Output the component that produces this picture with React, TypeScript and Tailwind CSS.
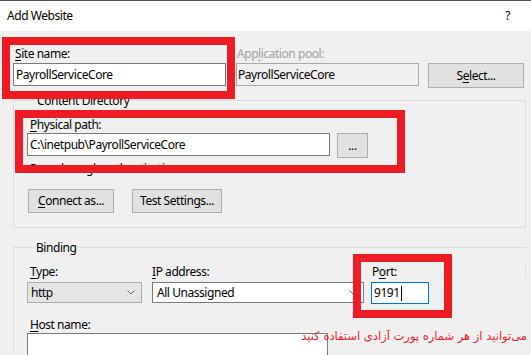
import React from 'react';

const Label = ({ under, rest, pre = '', className = '' }: any) => (
  <div className={`h-[16px] leading-[16px] ${className}`}>
    {pre}
    <span className="underline underline-offset-2">{under}</span>
    {rest}
  </div>
);

const Chevron = () => (
  <svg width="8" height="5" viewBox="0 0 8 5" className="shrink-0">
    <polyline points="0.5,0.5 4,4 7.5,0.5" fill="none" stroke="#6b6b6b" strokeWidth="1" />
  </svg>
);

const RedBox = ({ className }: any) => (
  <div className={`absolute border-[8px] border-[#ed1c24] pointer-events-none ${className}`} />
);

const App: React.FC = () => {
  return (
    <div
      className="relative w-[531px] h-[355px] overflow-hidden bg-[#f0f0f0] text-[12px] tracking-[-0.45px] text-black"
      style={{ fontFamily: '"Noto Sans", "Open Sans", sans-serif' }}
    >
      <div className="h-px bg-[#4d4d4d]" />
      <div className="h-[30px] bg-white flex items-center justify-between pl-[7px] pr-[21px]">
        <span>Add Website</span>
        <span>?</span>
      </div>

      <div className="pl-[13px] pr-[5px]">
        {/* site name / app pool */}
        <div className="flex items-start mt-[15px]">
          <div className="w-[213px]">
            <Label under="S" rest="ite name:" className="pl-[2px]" />
            <div className="mt-[1px] h-[23px] bg-white border border-[#7a7a7a] pl-[2px] flex items-center">
              PayrollServiceCore
            </div>
          </div>
          <div className="w-[183px] ml-[10px]">
            <Label pre="App" under="l" rest="ication pool:" className="pl-[1px] text-[#a0a0a0]" />
            <div className="mt-[1px] h-[23px] border border-[#a8a8a8] pl-[1px] flex items-center">
              PayrollServiceCore
            </div>
          </div>
          <button className="ml-[9px] mt-[17px] w-[96px] h-[25px] bg-[#e1e1e1] border border-[#adadad] flex items-center justify-center">
            S<span className="underline underline-offset-2">e</span>lect...
          </button>
        </div>

        {/* content directory */}
        <fieldset className="mt-[5px] w-[513px] border border-[#dcdcdc] pl-[13px] pb-[14px]">
          <legend className="ml-[9px] px-[1px] h-[15px] leading-[15px]">Content Directory</legend>
          <Label under="P" rest="hysical path:" className="mt-[9px] pl-[3px]" />
          <div className="flex items-start">
            <div className="w-[303px] h-[23px] bg-white border border-[#7a7a7a] pl-[2px] flex items-center">
              C:\inetpub\PayrollServiceCore
            </div>
            <button className="ml-[7px] w-[31px] h-[25px] bg-[#e1e1e1] border border-[#adadad] flex items-center justify-center">
              ...
            </button>
          </div>
          <div className="mt-[3px] h-[15px] leading-[15px] pl-[3px]">Pass-through authentication</div>
          <div className="flex gap-[18px] mt-[13px] pl-[1px]">
            <button className="w-[86px] h-[24px] bg-[#e1e1e1] border border-[#adadad] flex items-center justify-center">
              <span className="underline underline-offset-2">C</span>onnect as...
            </button>
            <button className="w-[90px] h-[24px] bg-[#e1e1e1] border border-[#adadad] flex items-center justify-center">
              Test Settin<span className="underline underline-offset-2">g</span>s...
            </button>
          </div>
        </fieldset>

        {/* binding */}
        <fieldset className="relative mt-[12px] w-[513px] border-t border-l border-[#dcdcdc] pl-[13px]">
          <legend className="ml-[8px] px-[1px] h-[15px] leading-[15px]">Binding</legend>
          <span className="absolute right-0 top-[7px] h-[15px] w-px bg-[#dcdcdc]" />
          <div className="flex items-start mt-[9px]">
            <div className="w-[115px]">
              <Label under="T" rest="ype:" className="pl-[3px]" />
              <div className="mt-[2px] h-[21px] bg-[#e5e5e5] border border-[#acacac] pl-[3px] pr-[6px] flex items-center justify-between">
                <span>http</span>
                <Chevron />
              </div>
            </div>
            <div className="w-[212px] ml-[10px]">
              <Label under="I" rest="P address:" />
              <div className="mt-[2px] h-[21px] bg-white border border-[#7a7a7a] pl-[4px] pr-[6px] flex items-center justify-between">
                <span>All Unassigned</span>
                <Chevron />
              </div>
            </div>
            <div className="w-[58px] ml-[7px]">
              <Label pre="P" under="o" rest="rt:" className="pl-[1px]" />
              <div className="mt-[2px] h-[22px] bg-white border border-[#0078d7] pl-[2px] flex items-center">
                9191
                <span className="ml-[1px] w-px h-[15px] bg-black" />
              </div>
            </div>
          </div>
          <Label under="H" rest="ost name:" className="mt-[13px] pl-[3px]" />
          <div className="w-[301px] h-[23px] bg-white border border-[#7a7a7a]" />
        </fieldset>
      </div>

      <RedBox className="left-[2px] top-[37px] w-[233px] h-[62px]" />
      <RedBox className="left-[15px] top-[110px] w-[390px] h-[63px]" />
      <RedBox className="left-[353px] top-[254px] w-[99px] h-[64px]" />

      <div
        dir="rtl"
        className="absolute right-[4px] top-[328px] text-[11.5px] tracking-normal text-[#ec1c2e]"
        style={{ fontFamily: '"DejaVu Sans", sans-serif' }}
      >
        می‌توانید از هر شماره پورت آزادی استفاده کنید
      </div>
    </div>
  );
};

export default App;
